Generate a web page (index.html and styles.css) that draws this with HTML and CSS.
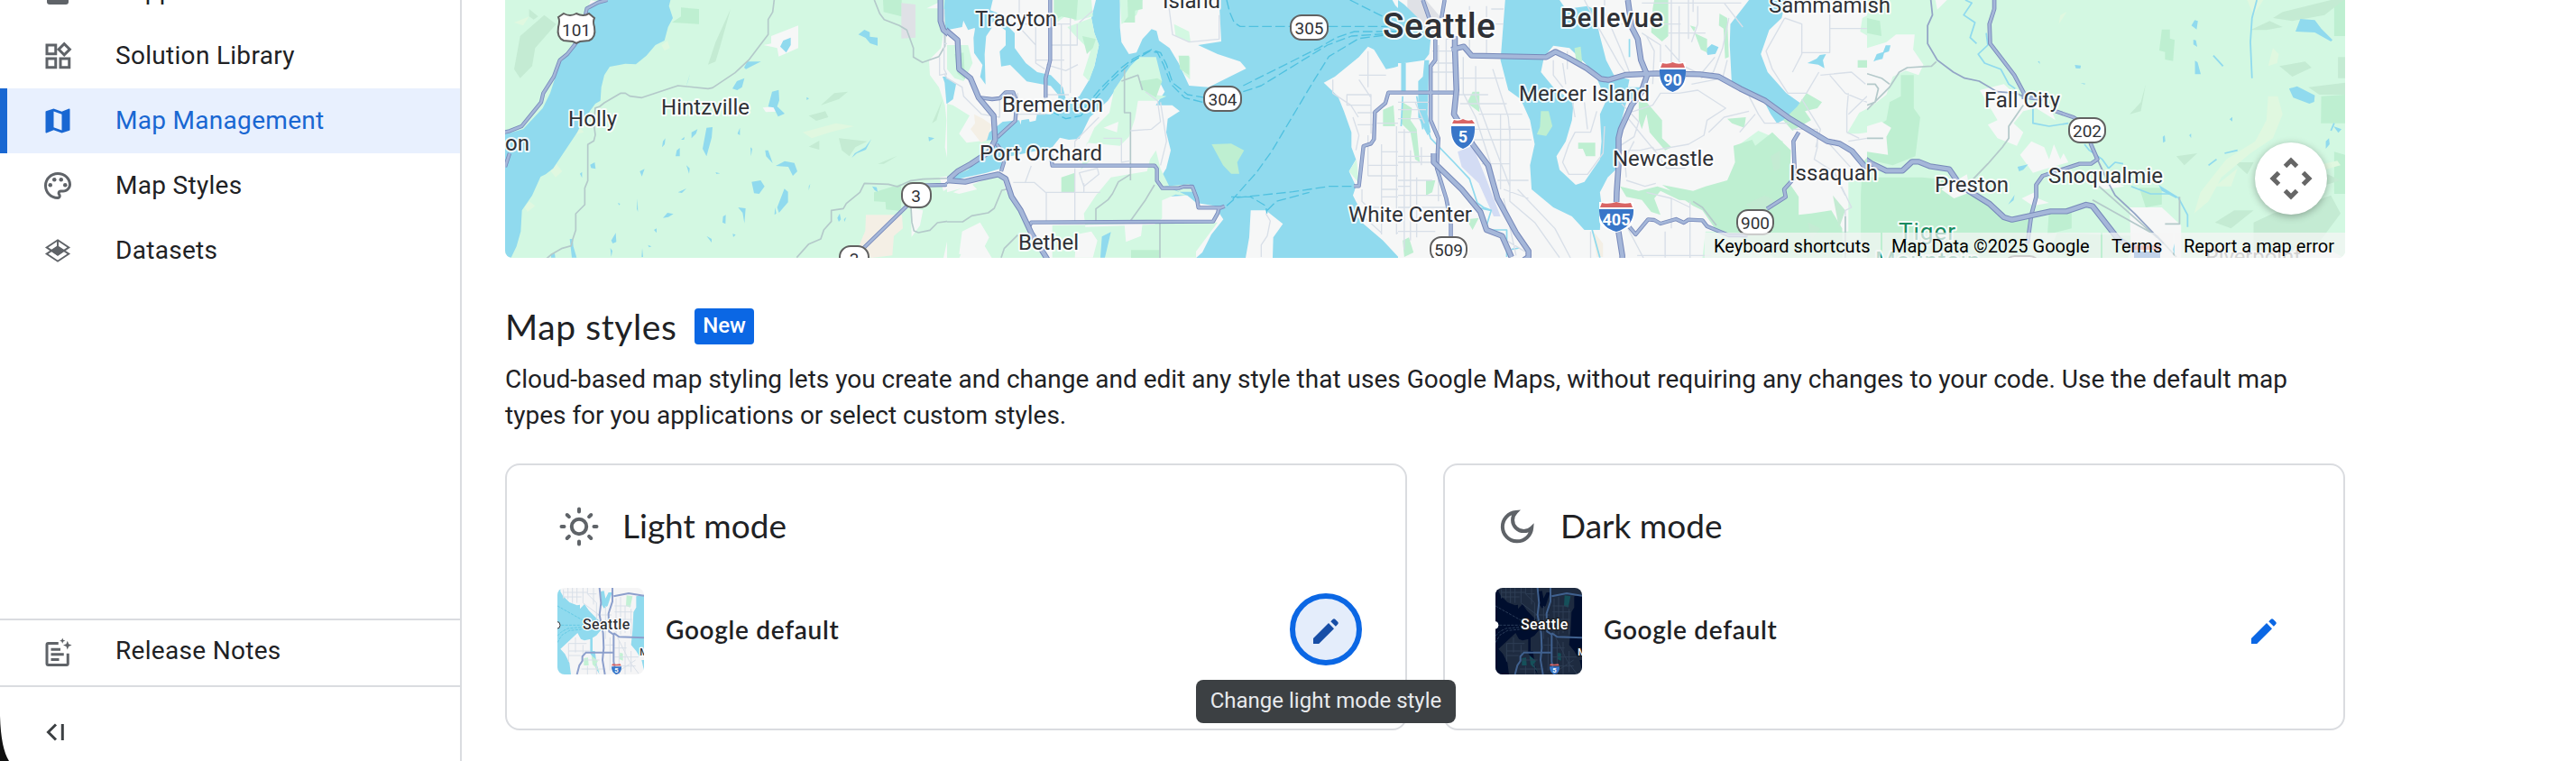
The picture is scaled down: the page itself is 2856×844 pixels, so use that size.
FILE: index.html
```html
<!DOCTYPE html>
<html lang="en">
<head>
    <meta charset="UTF-8">
    <title>Map Management</title>
    <link rel="stylesheet" href="styles.css">
</head>
<body>
<div class="sidebar">
    <div class="nav">
        <a class="nav-item first">
            <svg class="icon" viewBox="0 0 24 24"><rect x="4" y="2" width="16" height="20" rx="2"/></svg>
            <span>Support</span>
        </a>
        <a class="nav-item">
            <svg class="icon" viewBox="0 0 24 24"><path d="M3 3h8.500v8.500H3zm2 2v4.500h4.500V5zM3 13h8.500v8.500H3zm2 2v4.500h4.500V15zM13 13h8.500v8.500H13zm2 2v4.500h4.500V15zM16.800 1.700l5.500 5.500-5.500 5.500-5.500-5.500zm0 2.800l-2.700 2.700 2.700 2.700 2.700-2.700z" fill-rule="evenodd"/></svg>
            <span>Solution Library</span>
        </a>
        <a class="nav-item active">
            <svg class="icon" viewBox="0 0 24 24"><path d="M20.500 3l-.16.03L15 5.100 9 3 3.360 4.900c-.21.07-.36.25-.36.48V20.500c0 .28.22.5.5.5l.16-.03L9 18.900l6 2.100 5.640-1.900c.21-.07.36-.25.36-.48V3.500c0-.28-.22-.5-.5-.5zM15 19l-6-2.110V5l6 2.110V19z"/></svg>
            <span>Map Management</span>
        </a>
        <a class="nav-item">
            <svg class="icon" viewBox="0 0 24 24"><path d="M12 22C6.490 22 2 17.510 2 12S6.490 2 12 2s10 4.040 10 9c0 3.310-2.690 6-6 6h-1.770c-.28 0-.5.22-.5.5 0 .12.05.23.13.33.41.47.64 1.060.64 1.670 0 1.380-1.120 2.500-2.500 2.500zm0-18c-4.410 0-8 3.590-8 8s3.590 8 8 8c.28 0 .5-.22.5-.5 0-.16-.08-.28-.14-.35-.41-.46-.63-1.050-.63-1.650 0-1.380 1.120-2.500 2.500-2.500H16c2.210 0 4-1.790 4-4 0-3.860-3.590-7-8-7z"/><circle cx="6.500" cy="11.500" r="1.500"/><circle cx="9.500" cy="7.500" r="1.500"/><circle cx="14.500" cy="7.500" r="1.500"/><circle cx="17.500" cy="11.500" r="1.500"/></svg>
            <span>Map Styles</span>
        </a>
        <a class="nav-item">
            <svg class="icon" viewBox="0 0 24 24"><g fill="none" stroke="currentColor" stroke-width="1.300"><path d="M12 4.200l8.200 5.400-8.200 5.500-8.200-5.500zM12 9l8.200 5.400-8.200 5.400-8.200-5.400zM12 4.200V9"/></g><path d="M12 8.500l5.200 3.500-5.200 3.900L6.800 12z"/></svg>
            <span>Datasets</span>
        </a>
    </div>
    <div class="release">
        <svg class="icon" viewBox="0 0 24 24"><path fill="none" stroke="currentColor" stroke-width="2" d="M12.500 5H5a1 1 0 0 0-1 1v14a1 1 0 0 0 1 1h13.500a1 1 0 0 0 1-1v-7.500"/><path d="M7 8.500h7v2H7zM7 12.200h9.500v2H7zM7 16h6v2H7zM19.200 3.200l.9 2.300 2.300.9-2.300.9-.9 2.300-.9-2.300-2.300-.9 2.300-.9zM15.500 1l.6 1.500 1.500.6-1.500.6-.6 1.500-.6-1.500-1.500-.6 1.500-.6z"/></svg>
        <span>Release Notes</span>
    </div>
    <div class="collapse">
        <svg class="icon" viewBox="0 0 36 36"><path d="M17 9.500L8.500 18l8.500 8.500M24.300 9v18" fill="none" stroke="currentColor" stroke-width="3"/></svg>
    </div>
    <svg class="corner" viewBox="0 0 10 50"><path d="M0 0Q1 36 10 50H0z"/></svg>
</div>

<div class="content">
    <div class="map">
        <svg class="map-canvas" viewBox="560 0 2040 286">
            <!-- west: Hood Canal -->
            <svg x="550" y="0" width="501" height="286" viewBox="0 0 1503 858" preserveAspectRatio="none">
                <rect class="green" width="1503" height="858"/>
                <path class="shade" d="M110 30l30 25-15 10-15-10zM160 50l40 30-70 80-10 60-40 40-20-30 20-110zM1125 310l45-5-30 25-60 20zM1040 385l55-15 10 20-40 12zM1140 460l95 10-40 20-20 30-25-20zM1040 488l35-20v30zM1270 545l65-27-45 27zM780 30l-50 110-25 75 25-10 15-50zM1485 330l-35 80 15-10z"/>
                <path class="pale" d="M60 75l50-20-20 30zM550 150l20-14 8 24-18 8zM1020 440l110-30 60 10-80 20-60 20zM175 560l25-15 20 25-22 20zM250 450l30-25 12 15zM95 690l15-20 20 15-25 20z"/>
                <path class="water" d="M370 0L335 8 300 40 285 100 262 150 212 210 180 310 155 360 90 430 28 447V855l22 2 18-37 14-50 4-70 34-50 28-62 17-8 25-20 80-120 20-40 40-55 17-10 3-45 10-40 18-28 52-10 35 2 35-29 30-35 30-15 12-45 16-30-13-40 5-20z"/>
                <path class="park" d="M615 25l60 5v50l-90-5 30-20zM1287 0h62v55l-60-15zM1257 640l90-28v90l-50-5-2-25-38-2z"/>
                <path class="gray" d="M1348 10l47 5v110l-47 3z"/>
                <path class="sand" d="M1230 715h120l3 45-30 25-5 65-70 8-45-30 25-60z"/>
                <path class="urban" d="M915 120l90-35v75l-65 28-5-28-45-10 25-5zM887 358l50-5v18l-40 2zM300 40l15-40 20 5zM1440 200l40-40 20-120h3v500l-10-50 5-90-5-50-20-60-30-40zM1527 410h-5v40h-15zM1380 690l40 10-10 50-28 38zM1475 590l28-4v40l-15 10zM1503 790l-15 68h15zM1432 28l40-20v20z"/>
                <path class="water" d="M945 155l10-20 25-10v25l-15 25zM1205 115l20-16 18 8v15l26 3v27l-25-8-15-18zM825 225l10-20 46 0-30 15-20 10zM786 295l15-25 25-10-8 30-16 10zM918 305l22-6 2 35-7 20 25 24-22 10-15-30-18-3zM645 245l-5 20-10 30zM700 425l20-2-3 35-17 62-13-25zM650 440l20-10-5 15-15 15zM615 465l12-10-2 10zM552 490l3-20 8-10-2 20zM597 520l4-20 10-8v28zM803 445l8-20v25zM846 490l6 5-4 25zM895 500l10 0 15 43-22-23zM930 552l30-16 32 6 10 28-15 15-15-30zM850 605l30-5 13 20-18 25-17-2zM935 690l24-62 12 10v35l-30 35zM1183 525l10-15 35-20 20-27-18 35-30 12zM1438 455l20 5-18 10zM1485 255l30 0 20 35-5 45-32 10-6-70zM1490 30l2-30h11v100h-8zM313 548l15-8 3 22-15-3zM279 578l7-6v20zM478 570l16-8-9 25zM605 640l28-13-15 15zM633 550l11 10-2 18zM470 660l2 45-4-10zM405 675l8 3-4 5zM730 573l15 4-12 2zM555 725l15-17 20 4-17 10zM755 720l9-5-1 30-10-5zM805 690l25 3-4 50-6-35zM383 800l15-25 2 30-12 5zM245 795l10 0 2 25 11 37h-16zM183 845l12-2 2 14h-14zM486 825l3 30h-5zM380 825l7 10-4 20zM525 765l9-5v15zM700 785l17 10v12zM757 795l7 20zM787 778l10 3-8 8zM722 825l5 10zM1251 620l15 3 3 15-10-5zM1135 725l8-15 4 20-7 8zM1157 730l8-8-6 16zM1040 620l5-8-5 22zM928 690l4 20-6 5zM1033 323l8 5-8 5zM505 815l12 5-8 3z"/>
                <path class="minor" d="M925 0l-5 40-15 25v50l-65 85-45 42-75 50-15 3-100-10-120 40-40-5-15-10h-15l-55 32-15 12-15 5-5 50 5 40-5 20-20 12v120l-10 25v55l-30 30v55l-10 30-5 22-30 8-35 20-30 25-3 32M1258 0l18 45 15 20 50 20 25 15 22 60v30l30 18 55-20 20-35v-70M1000 857l40-45 40-17 10-30 25-28v-37l40-6 10-17 45-37 15-30 80 3 30 8 45-20 40-5 123-4M1380 690l3 50 7 28 15 6 38-8 25-25 35-5"/>
                <path class="fine" d="M1490 30v200l10 20M1475 190v60l25-5M1490 145h13M1490 245l13 20"/>
                <path class="casing" d="M370 0l-30 8-38 20-20 90-20 30-25 32-25 20-20 55-35 55-7 30-65 80-40 16-17 4M45 510l-15 45"/>
                <path class="highway" d="M370 0l-30 8-38 20-20 90-20 30-25 32-25 20-20 55-35 55-7 30-65 80-40 16-17 4M45 510l-15 45"/>
                <path class="casing wide" d="M1478 0v70l10 30 50 40v95l20 12"/>
                <path class="highway wide" d="M1478 0v70l10 30 50 40v95l20 12"/>
                <path class="casing" d="M1190 857l195-190 30-50 80-2 65-45M1515 600l45 8"/>
                <path class="highway" d="M1190 857l195-190 30-50 80-2 65-45M1515 600l45 8"/>
            </svg>

            <!-- Kitsap and Puget Sound -->
            <svg x="1050" y="0" width="501" height="286" viewBox="0 0 1503 858" preserveAspectRatio="none">
                <rect class="water" width="1503" height="858"/>
                <path class="urban" d="M152 0H495l-15 60 10 50 15 40-15 70-20 50-30 50-45 10-10-40-40-40-45-10-38-30-37-50v-50l-35-35-40 15-12-30zM0 100l50-10 5-25 20-4 18 35-5 30 2 50 28 40-8 40 18 25-3-100 5-60 30-45 35 25 0 50-20 20 5 50 30-5 55 55 80 15 25 30 0 40-25 25-45-5-5 25-20 5-3-10-25 4-2 15-5-15-55 5-50 40-15 70-50 45-60 25-50 20v-260l30-30-15-60-15-15z"/>
                <path class="urban" d="M0 605l60-15 70-15 50-15 5-35 75-15 90-20 25-32 30 7 35-3 35-72 60-55 65-95 80-30 16 0 10 60 18 35-30 45 55 0 25 20-40 25-5 45 15 60-15 60-30 50 0 30 30 15 70-5 30 25 60 10 30 45-40 50-30 60-32 28v20H0z"/>
                <path class="urban" d="M575 0H905l7 138-77 12 65 30 75 25 20 23-65 32-60 30-65-5-35-75-30-50-35-25-8-32-17-6-30 33-20 45-25 5-25-40-5-50zM1010 700h50l57 45-32 45-2 68h-90l12-68zM1253 275l37-20 80-65 30-35 20 10 40 65 25-5 18-5V857l-53-57-65-55-20-25 5-30-20-40 10-30-23-50 23-40-15-40v-50l-25-70-20-50zM1503 0v30l-12-12-10-18z"/>
                <path class="green" d="M0 150l70 0 15 60-30 60-30-10-25-30zM0 345l20 5 55 35-35 60 25 30 85-10-10 30-70 70-70 30zM360 0h120l5 55-60 15-20-25-40 30zM400 90l80-30 10 50 15 40-15 70-18 50-20-20 25-80-50-50zM555 300l55-80 30-30 55 0 20 80-30 45 45 5-35 15-60 0-10 60-20 60-30 30-110-10-20 90 30-30-25-20 40-90 50-50zM695 500l-20 30-10 40-60 10-60 10-50 60-40 60 5 45 230-8 25-20 0-60 45-20 40 5-60-30-30-60zM0 640l70-20 110-45 15 60 75 110 60 115H150l-30-50-60 5-20 45H0zM350 750l550-10-72 97v20H350zM725 620l80-7 25 25-60 0zM575 0h75l-20 50-50 30zM770 185l38 5v75l-20-20zM755 80l50 25 5 35-50-20zM1337 570l25-40 8 80z"/>
                <path class="urban" d="M50 770l60-30 30 50-30 60-70-5zM430 780l50-10 20 30-15 57h-60zM590 745l60 0-5 40-50 20zM520 425l50-20-5 35zM20 640l60-30 20 20-60 15z"/>
                <path class="park" d="M355 0h80l-5 65-50-10-25 15zM450 120l45 10-10 30-20 20zM600 0h50v30l-25 5v40h-38l15-20zM640 270l60-10 15 10-20 55-50-30zM770 185h35v65l-30-20zM380 590l45-15v65h-45zM612 832h95v26h-95zM880 480l65-2 43 22-23 40 7 38h-27l-27-28zM1450 365l35-15 5 70h-40zM25 180l30-5 5 90-25-20zM1515 360h-12v40l20-5zM1540 790l-15 20-10 20 25 17z"/>
                <path class="sand" d="M78 430l15-20-3-30 30 15 28 20-15 50-20 10z"/>
                <path class="water" d="M0 260l30 20-10 50-20 15zM510 857l5-70 30-15-20 85zM0 0h150l-15 30 50 20-20 20-95 30-20-40-30 10-20 20z"/>
                <path class="minor" d="M0 738h52l30-20 55-10 20-15 25-60 25-5M180 857l10-30 45-45M495 735v-40l40-30 15-20 20-40 40-25M610 735l50-70 30-50M708 740v118M590 220v155h20v225M580 270l55-20 15 50"/>
                <path class="fine" d="M240 0v90l55 60v60l30 20M295 90v110h95M343 150h90V80M380 80v230M410 80v230M330 215l65 20 40-20M440 75l45-40M230 80h180V60M0 260l50 30 5 30 60 60 60 10v-70M235 310v70l90 0v-65h80M425 470v60M520 460h60v80l30-5M425 470l80-80M610 435l70-5 30-25-10-70-40-30M735 0l15 115 55 25 100-10V50M425 560v180M330 640h180M330 640v100M220 607h70l40 35M260 607l20-55M440 575l60-15 5 20-50 40zM455 610v30M710 340l20 130-20 80M1400 170v120M1283 265v45l60 40 25 40M1370 250h90M1330 315h80v35h-80zM1370 265l40 60v120M1365 375h60v40h-60M1350 390l20 60-10 50M1400 450v135M1400 550h103M1400 585h103M1445 480v300M1515 350v480M1445 505h60v150h-60M1445 630h58M1380 630v40l20 20M1385 690h60M1385 720l60 55M1430 410h73M1060 710l15 25-10 50-20 30v40M1495 420v360M1495 775h10"/>
                <path class="ferry" d="M930 0l10 40 15 35 20 13H1503M1340 0l110 55M860 325l-60-10-50-40-20-60-20-40-30-10-60 30-40 30-70 70-50 60-60 10-30-10M850 340l-60-15-45-45-25-65-20-40-25-5-60 35-80 75-90 105-50 10-40-20M985 285l100-50 150-75 60-35 60-20h150M985 305l60-20 220-135 80-30 150-10M1450 118l-80 10-100 60-50 80-140 235-50 70-80 90M930 685l30-27 190-20 120-18 90 0M945 655h65l50 30 4 25M1065 700l30-30 110-30"/>
                <path class="casing" d="M343 0v200l-15 60v65M110 325l40 5 25-3 20-20h25l12 30-5 65-60 55M180 570l15-50-30-40M345 515l5 36h340l8 10v40l18 25h55l15-5h30l15 40 5 30h75l12-5M905 690l-5 20-15 27-605 3-10 20M1503 308h-35l-10 35-35 30-3 90-10 15-25 8-15 133h-17"/>
                <path class="highway" d="M343 0v200l-15 60v65M110 325l40 5 25-3 20-20h25l12 30-5 65-60 55M180 570l15-50-30-40M345 515l5 36h340l8 10v40l18 25h55l15-5h30l15 40 5 30h75l12-5M905 690l-5 20-15 27-605 3-10 20M1503 308h-35l-10 35-35 30-3 90-10 15-25 8-15 133h-17"/>
                <path class="casing wide" d="M-10 95l45 38 5 97 38 30 27 65 50 60 5 80-20 40-60 40-45 25-45 40M0 600l60 5 40-10 70-15 25 15 20 60 30 45 35 75 55 90"/>
                <path class="highway wide" d="M-10 95l45 38 5 97 38 30 27 65 50 60 5 80-20 40-60 40-45 25-45 40M0 600l60 5 40-10 70-15 25 15 20 60 30 45 35 75 55 90"/>
            </svg>

            <!-- Seattle, Bellevue, Issaquah -->
            <svg x="1550" y="0" width="521" height="286" viewBox="0 0 1513 858" preserveAspectRatio="none">
                <rect class="urban" width="1513" height="858"/>
                <path class="gray" d="M30 0h60l45 55-5 70-40-15-60-80z"/>
                <path class="water" d="M0 0l20 15 50 50 35 65-5 50-15 20-65 10H0zM10 210h15v95h-15zM345 0h175l20 30 70-10 20 10 20 90 20 80 25 50 50 15-5 25 60 0-5 20-60 30-15 60-15 60v100l-30 30-25 50 5 40-5 85-50 0-40-45-60-30-70-60-5-80 15-70-15-80-30-70-40-30-25-100zM1130 0h120l-15 60-40 40-27 80 22 60 60 70 55 40-15 30-40 15-30 15-20-30-30-60-95-30-7-140 2-70zM85 200l15 0-5 180 10 60-10 10-30-60 0-120 15-15zM990 165l20-18 22 10-10 22-25 4zM1318 210l30-15 10-12 20-3-10 20 5 27-20-12zM1533 210v-35l25-5v10zM560 530l5 12h-8z"/>
                <path class="urban" d="M470 190l30-38 52 8 50 50 38 50 30 75-20 45 5 90-5 60-50 75-28 10-52-50-10-45 30-50 20-70 5-60-65-50-40-50z"/>
                <path class="green" d="M1445 445l40-70 28-15v80l-30 5zM1100 480l60-45 80 35-20 50zM1450 600l60 0v258h-60zM1495 60l18-10v70l-25-15zM990 770h520v88H980z"/>
                <path class="park" d="M825 0h45v120l-20 18-35-30 5-80zM1035 45l25 15 5 130-12 5-5-100-15-10zM955 110l40 20v45l-20-10zM940 85l18 5-5 15zM460 370h25l12 50-20 32-30-5 10-25zM580 475h55v45h-30l-10-25h-15zM568 160l20-5 5 55-20-10zM240 305h22v68l-40-30zM15 340l30 20-5 40 20 30 10 110-15-10-15-90-30-30zM775 340l25 0 50 60 0 60 30 30-20 10-50-60-10-60-15 50-10-30zM1080 485l60-20 10 20 55-45 60 60-5 110 30 45v60l40-5 65-10 35 60v130l-90 10-160-80-160-60-40-60-30-15-100-70 100 20 40-15 70-20 25-60zM1240 400l45-45 30-45 50 30-15 20-40 10 20 30-60 35zM1480 200h45v25h-45zM715 620l60 15 60-15 90 30 40 20-60-5-60-30-20 25 20 55-30-10-30-40-50-10zM1060 395l60-5-5 35-40-15zM90 600l30 0-10 40-20 10zM220 730l40-5-20 40zM15 800l20-10 15 50-30 15zM1495 540l20-20v280h-25v-150zM1130 780l180 20 100 57h-200z"/>
                <path class="shade" d="M1120 680l60-30 40 20-15 25-60 5zM1200 520l30-20v60l-20 10zM1320 740l40 20-30 40zM1400 650l40 50-20 60z"/>
                <path class="industry" d="M192 505l48-20 40 100 50 135h-22l-48-110-55-55z"/>
                <path class="sand" d="M625 765l35 45v45h-20z"/>
                <path class="stream" d="M85 400l20 60 75 80 50 55 25 80 20 15 25 10-15 50M10 420l5-100M60 320l20 110M250 690l50 10M280 765h70v90M365 830l25-5M625 765l25 92M745 130v60M1533 210l5-30"/>
                <path class="fine" d="M130 150v520M155 130v170M110 170h80M110 210h80M110 240h80M155 130h30M0 340h100M0 365h90M0 395h80M0 540h110M0 520h120M20 430v400M40 500v300M0 650h140M0 690h160M0 770h120M60 590v200M0 620h40M210 190v120l40 80 50 160 20 100M250 220v100l50 140 60 160M285 20v170M305 230l50 160 5 60M330 380v250M360 420v230M215 430h210M240 465h190M270 545h90M320 600h100M340 630l80 30M300 30h40M240 80h100M230 20v160M260 380h140M200 260h140M190 315h100M200 345h150M360 620v50l80 70 80 117M340 660l40 190M300 770l130 80M385 630l120 130 50 98M620 770v88M600 0l50 100 60 110 20 30M665 0v40l50 120 30 80M690 80h220M880 0v240M905 20v200M935 0v130M965 20v60l-20 60M785 10h320M785 110l60 40v80M860 150l60 70 60 30M870 110h120M1020 190l-40 50M1065 60l-20 100-30 80-40 20M1050 10l60 80M1060 200l-15 60-100 20M1130 320l30 60 20 30h80M820 350l25-40 60 0 60-10 90 60-60 40-10 50-50 30-110 20-40-50-55-70zM720 345l55 60-15 50-45 30M720 500l60 0 40-10 45 70 60 0M735 600l60 20 35-10M760 470l-30 60 5 60M880 660v100M940 670v188M800 640l80 20 60 30M730 740l60 118M860 770v87M770 850h240M1245 60l55 20v100l-30 60M1245 60l-60 110 20 60 50 80 60 0 40-70M1300 175h90V20M1390 95h120M1360 250l100-10 45 40M1390 250l50 60 70 30M1450 310l-5 60 0 70 40 20M1300 330l60 100-15 60M1270 430h80v60l-10 40 60 40 40 80M1400 560l60 130-20 10v140M1460 560l-70-80M1450 470l60-10M1450 380l60-60M500 200v50l60 80 10 60M530 210l10 70M545 170v60M640 370l-20 70-50 0-20 40-20 60 20 40 60 0 50-70 5-90M600 340l10 90M1000 440l50-50 80-20M1100 440l50-60M950 0v40M800 120l25 50-5 110M1440 720v138M0 600h110M75 490v60M0 440h60M55 340l30 70"/>
                <path class="minor" d="M950 670l30 20 45 60M1440 720v138"/>
                <path class="casing" d="M1290 440l-17 30 5 120-35 40 5 25-60 40M745 755l20 25 40-50 20 2 20 12 50-15 25 12 15-10 45 2 15 20 70 30 60 0M0 308h180M120 130v70l-15 20v180l25 60-5 100 30 100 15 80v100M80 0l20 60M150 0l-10 60"/>
                <path class="highway" d="M1290 440l-17 30 5 120-35 40 5 25-60 40M745 755l20 25 40-50 20 2 20 12 50-15 25 12 15-10 45 2 15 20 70 30 60 0M0 308h180M120 130v70l-15 20v180l25 60-5 100 30 100 15 80v100M80 0l20 60M150 0l-10 60"/>
                <path class="casing wide" d="M183 120v40l5 140-8 80 60 100 50 70 30 110 60 115 40 60v20l-15 10M172 165l40-10 25 30 240 5 30-18 40 20 60 35 45 35 25 4 55-17 100-5 140 3 60 8 70 40 80 40 80 60 120 75 40 8 40 25 40 50h50l30-25 30 0 50 20M115 510v30l90 90 60 75 20 60 50 20 30 70M740 0l12 90 20 40 10 70 20 50-20 60-30 40-35 80-7 30v90l-6 90-2 80 20 130 0 30-10 30"/>
                <path class="highway wide" d="M183 120v40l5 140-8 80 60 100 50 70 30 110 60 115 40 60v20l-15 10M172 165l40-10 25 30 240 5 30-18 40 20 60 35 45 35 25 4 55-17 100-5 140 3 60 8 70 40 80 40 80 60 120 75 40 8 40 25 40 50h50l30-25 30 0 50 20M115 510v30l90 90 60 75 20 60 50 20 30 70M740 0l12 90 20 40 10 70 20 50-20 60-30 40-35 80-7 30v90l-6 90-2 80 20 130 0 30-10 30"/>
            </svg>

            <!-- east: Snoqualmie valley -->
            <svg x="2070" y="0" width="530" height="286" viewBox="0 0 1484 858" preserveAspectRatio="none">
                <rect class="green" width="1484" height="858"/>
                <path class="park" d="M0 60l40 10 5 50-45-10zM105 250h40v110l20 30-15 130-70 30-80-20v-90l60-40 10-60 35-20zM0 590h170l100 10 160 130 75-10v138H0zM565 700l70-10v70l-75 20zM915 98h25v30l15 5-5 70-25-5v-25l-18-5zM845 625l70 0v55l-50 10zM1450 0h34v120h-34zM1410 320l74-5v95h-75zM1450 505l34 10v130h-34zM590 775l240 10-20 73H560z"/>
                <path class="shade" d="M1290 40l150-40h40l-60 50-100 20-60-10zM1370 290l114-15v40h-80zM1280 220l80-15 20 20-60 30zM1190 100l60-30 40 20-50 10zM1462 190h22v70h-22zM865 280l-15 90-35 10 35-40zM1200 740l60-30 100-30 80-30 30 60-90 130h-180zM1080 740l60-40 60 0-70 60zM1230 610l80-40-20 50zM1370 620l60-40 40 20-60 20zM1140 540l60 0-20 40zM960 520l65-10-40 40z"/>
                <path class="pale" d="M1245 320l30 0 15 60-30 80-70 50-90 80-40 80-45 40 20-70 80-110 90-60 35-70zM1260 160l18 20-5 30-28 10zM1180 0h50l-30 50zM600 50l20-10-25 40zM1400 550l60-15 10 15-50 15zM1080 620l70-60-20 60z"/>
                <path class="urban" d="M90 115h58l-5 50 32 50-15 35-40-15-40 20-20 60-60 50V160l60-20zM212 0h36l-30 32zM350 300l75-20 30 30 60 40 50 0 20 50-60-40-40 10-30 40 30 30-20 45-60-25-30-45 30-15zM475 515l35-45 40 20 15 40 15-50 20 50 10-20 15 30-80 25-30 10-40-60zM0 420l45-15 30 20-15 30 5 60-65-10zM815 690l100 0 60 60v108H820zM480 660l40-20 10 20 35 15-50 10zM720 590l80 30-60 10-30-10zM1330 858l70-50 80 50zM230 630l80-50 10 60-50 20z"/>
                <path class="water" d="M1330 105l15-42 45 4 20 28 35 38-5 5-50-30zM1310 295l25-8 55 30-2 22-15 6-50-20zM1007 85l10-18 10 3-4 28zM1013 132l8 2 4 22-12-8zM1018 202l8 5 10 40-18 0zM645 216l19 2-2 10-14-1zM530 205l5-2 2 10zM663 276l15 2-3 3zM1448 420l25 10-10 12zM1424 470l10-10 2 20-12 15zM1125 397l9-8v15zM918 455l6-5 2 20-7 5zM1000 450l6-6v15zM467 555l33-8-15 18-13 5zM438 680l20-32-3 18zM20 205l10-25 20-7 8-22h15l-5 20-15 5-5 20-20 5zM905 615l60 40-5 5-45-25zM950 830l4-20v40z"/>
                <path class="stream" d="M305 0l20 10-25 40 35 25-15 50 20 20M370 110l5 40-30 30 20 30 50 20 25 50 20 15M1210 0l-15 60-5 80 5 120M515 355v55l50 10 60-10M675 480l15 20 40 30 20 30M750 560l20-20 25 5M820 620l60 25 60 0M965 655l30 60v40M1060 550l25-20M1110 510l40-10M1075 185l30 35M1450 410l-10 25"/>
                <path class="minor" d="M215 205l-15 15-75 5-25 15-30 50-70 75M0 245l45 15 25 20M0 280l25 0 10 15-10 45-25 10M485 350l-45 70v40l-20 30-45 55-45 50M0 460h50M700 665l200 120 60 70M970 655v90h-45M720 620l180 170"/>
                <path class="line" d="M198 0l5 50-15 35v60l30 55 50 40 35 20 45 10 55 35 60 5 40 20M715 530l30 70 25 50 60 60 90 100"/>
                <path class="casing" d="M395 0v30l-15 50 2 65 75 105 30 60v20M585 370l55 20 45 30 10 60 20 50-20 15-35 0-115 40-20 30v40l-15 60-12 95M505 325l40 5"/>
                <path class="highway" d="M395 0v30l-15 50 2 65 75 105 30 60v20M585 370l55 20 45 30 10 60 20 50-20 15-35 0-115 40-20 30v40l-15 60-12 95M505 325l40 5"/>
                <path class="casing wide" d="M-5 530l20 15 45 23h50l30-30 20 0 35 15 60 10 35 55 90 60 45 45 25 8 120-28 50 0 60-22 20 5 80 110 60 40"/>
                <path class="highway wide" d="M-5 530l20 15 45 23h50l30-30 20 0 35 15 60 10 35 55 90 60 45 45 25 8 120-28 50 0 60-22 20 5 80 110 60 40"/>
            </svg>

            <!-- route shields -->
            <g class="route">
                <path d="M619 19l6-4q7 4 14 0 8 4 14 0l6 5q-2 4 0 10 2 12-6 15l-10 1-4 2-4-2-10-1q-8-3-6-15 2-7 0-11z"/><text x="639" y="39.500">101</text>
                <rect x="1431" y="17" width="41" height="27" rx="12"/><text x="1451.500" y="37.500">305</text>
                <rect x="1335" y="96" width="41" height="27" rx="12"/><text x="1355.500" y="117">304</text>
                <rect x="1000" y="203" width="32" height="27" rx="12"/><text x="1015.500" y="223.500">3</text>
                <rect x="931" y="273" width="32" height="27" rx="12"/><text x="947" y="294">3</text>
                <rect x="1586" y="263" width="40" height="27" rx="12"/><text x="1606" y="284">509</text>
                <rect x="1926" y="233" width="40" height="27" rx="12"/><text x="1946" y="254">900</text>
                <rect x="2294" y="131" width="40" height="27" rx="12"/><text x="2314" y="152">202</text>
                <rect x="2222" y="284" width="40" height="27" rx="12"/>
            </g>
            <g class="interstate">
                <path class="i-white" d="M1609 132h26v20q0 9-13 14-13-5-13-14zM1840 69h29v20q0 9-14.500 14-14.500-5-14.500-14zM1773 224h38v20q0 9-19 14-19-5-19-14z"/>
                <path class="i-red" d="M1610 137l2-4q5 2 10-1 5 3 10 1l3 4zM1841 75l2-5q6 2 11.500-1 5.500 3 11.500 1l2 5zM1774 230l2-5q8 2 16-1 8 3 16 1l2 5z"/>
                <path class="i-blue" d="M1609 140h26q1 20-13 25-14-5-13-25zM1840 77h29q1 20-14.500 25-15.500-5-14.500-25zM1773 232h38q1 19-19 25-20-6-19-25z"/>
                <text x="1622" y="158">5</text><text x="1854.500" y="95">90</text><text x="1792" y="250">405</text>
                <path class="i-red" d="M2366 272h28l2 5h-31z"/><path class="i-blue" d="M2366 279h29v10h-29z"/>
            </g>

            <!-- place names -->
            <g class="place">
                <text x="560" y="166.500">on</text>
                <text x="630" y="139.500" textLength="54">Holly</text>
                <text x="733" y="127" textLength="98">Hintzville</text>
                <text x="1081" y="29" textLength="91">Tracyton</text>
                <text x="1289" y="9" textLength="64">Island</text>
                <text x="1111" y="124" textLength="112">Bremerton</text>
                <text x="1086" y="177.500" textLength="136">Port Orchard</text>
                <text x="1129" y="276.500" textLength="67">Bethel</text>
                <text x="1495" y="246" textLength="137">White Center</text>
                <text x="1684" y="111.500" textLength="145">Mercer Island</text>
                <text x="1961" y="14" textLength="135">Sammamish</text>
                <text x="1788" y="184" textLength="112">Newcastle</text>
                <text x="1984" y="200" textLength="98">Issaquah</text>
                <text x="2200" y="119" textLength="84">Fall City</text>
                <text x="2145" y="213" textLength="82">Preston</text>
                <text x="2271" y="203" textLength="127">Snoqualmie</text>
                <text class="bellevue" x="1730" y="29.500" textLength="114">Bellevue</text>
                <text class="seattle" x="1533" y="41.500" textLength="125">Seattle</text>
                <text class="mountain" x="2105" y="266" textLength="63">Tiger</text>
                <text class="mountain" x="2079" y="298" textLength="116">Mountain</text>
                <text class="faint" x="2445" y="293" textLength="106">Riverpoint</text>
            </g>
        </svg>
        <div class="pan">
            <svg viewBox="0 0 80 80"><path d="M33.500 26.500l6.500-6.500 6.500 6.500M33.500 53.500l6.500 6.500 6.500-6.500M26.500 33.500L20 40l6.500 6.500M53.500 33.500L60 40l-6.500 6.500"/></svg>
        </div>
        <div class="attribution">
            <span class="keys">Keyboard shortcuts</span>
            <span class="data">Map Data ©2025 Google</span>
            <span class="terms">Terms</span>
            <span class="report">Report a map error</span>
        </div>
    </div>

    <div class="heading">
        <h2>Map styles</h2>
        <span class="badge">New</span>
    </div>
    <p class="intro">Cloud-based map styling lets you create and change and edit any style that uses Google Maps, without requiring any changes to your code. Use the default map<br>types for you applications or select custom styles.</p>

    <div class="cards">
        <div class="card">
            <div class="card-title">
                <svg class="mode" viewBox="-24 -24 48 48"><circle r="8.200"/><path stroke-linecap="round" d="M0-19.500v3M0 16.500v3M-19.500 0h3M16.500 0h3M-13.300-13l2.200 2.200M13.300-13l-2.200 2.200M-13.300 13l2.200-2.200M13.300 13l-2.200-2.200"/></svg>
                <span>Light mode</span>
            </div>
            <div class="card-row">
                <svg class="thumb light" viewBox="0 0 288 288">
                    <g id="downtown">
                        <rect class="t-land" width="288" height="288"/>
                        <path class="t-water" d="M0 0h10v12l8 14 22 22 25 10 10-2v14l15-16 15 22 20 20 15 14 5 30-15 18-20 12-20 5-12-5-11-20-57 53 15 17 15 30 5 38H0zM143 12l12-2 5 25 10-20 12 0-15 45-12 8-8-12zM262 28l26-5v190l-15 15-11-18-17-20 5-50 3-60 9-15zM109 165h8v45h8l5 40 10 38-12-20-12-40-7-10zM280 240h8v35z"/>
                        <path class="t-park" d="M230 25l20 3-8 37-14-5zM88 234l14-2 2 26H88zM113 225l22 18-8 12 15 25-25-25zM208 215l10 3v24l-12-5z"/>
                        <path class="t-fine" d="M20 5v30M35 0v38M50 0v50M65 0v50M85 0v50M100 0v20l30 30v60M20 15h80M20 30h60M100 20h30M120 0v55M85 50l60 45M130 90h50M120 110h50M195 35v120M210 30v125M225 60v90M245 70v85M190 60h55M190 80h60M190 105h58M160 60v110M200 165l40 80 30 40M175 165v110M205 175v113M225 180v108M245 210v70M190 200h40M190 230h80M190 260h70M160 190h30M60 165v50M37 185h60M37 210h70M37 225h40M37 185v60M85 190v30M80 240h60M100 260v28M130 250v38M80 270h80M200 280l60-40"/>
                        <path class="t-ferry" d="M0 60l85 48M0 124h80M0 160l15-15 20-10 45-4M0 182l15-25 25-15 40-4"/>
                        <path class="t-road" d="M140 0l5 50-5 40 12 60 2 50-4 40 8 48M183 0v45l-13 40 2 60 15 10v90l8 43M187 150l18 13 83 3M187 28l50-10 51 8M65 288l8-30 10-15 0-15 12-13h92"/>
                        <path class="i-red" d="M180 259l3-6 13 1 13-1 3 6z"/><path class="i-blue" d="M180 262h33q2 20-16 26-18-6-17-26z"/>
                        <text class="t-route" x="196.500" y="281">5</text>
                        <circle class="t-dot" cx="-3" cy="124" r="12"/>
                        <text class="t-name" x="84" y="137" textLength="157">Seattle</text>
                        <text class="t-name small" x="274" y="226">M</text>
                    </g>
                </svg>
                <span class="style-name">Google default</span>
                <button class="edit focused">
                    <svg viewBox="0 0 28 28"><path d="M0 22v6h6.200L23 11.200 17 5zM19.300 3.300l2.200-2.200q1.500-1.500 3 0L27 3.600q1.500 1.500 0 3l-2.100 2.100z"/></svg>
                    <span class="tooltip">Change light mode style</span>
                </button>
            </div>
        </div>
        <div class="card">
            <div class="card-title">
                <svg class="mode" viewBox="-24 -24 48 48"><path d="M-1.300-16A16.200 16.200 0 1 0 16.200 1.500 12.200 12.200 0 0 1-1.300-16z"/></svg>
                <span>Dark mode</span>
            </div>
            <div class="card-row">
                <svg class="thumb dark" viewBox="0 0 288 288"><use href="#downtown"/></svg>
                <span class="style-name">Google default</span>
                <button class="edit">
                    <svg viewBox="0 0 28 28"><path d="M0 22v6h6.200L23 11.200 17 5zM19.300 3.300l2.200-2.200q1.500-1.500 3 0L27 3.600q1.500 1.500 0 3l-2.100 2.100z"/></svg>
                </button>
            </div>
        </div>
    </div>
</div>
</body>
</html>
```

FILE: styles.css
```css
*{
    box-sizing: border-box;
}
html{
    height: 844px;
    overflow: hidden;
}
body{
    margin: 0;
    display: flex;
    height: 844px;
    overflow: hidden;
    background: #fff;
    color: #202124;
    font-family: Roboto, sans-serif;
    font-size: 28px;
}

/* sidebar */
.sidebar{
    position: relative;
    display: flex;
    flex-direction: column;
    width: 512px;
    height: 844px;
    border-right: 2px solid #dadce0;
    overflow: hidden;
}
.nav{
    flex: 1;
    min-height: 0;
}
.nav-item{
    display: flex;
    align-items: center;
    gap: 46px;
    height: 72px;
    padding-left: 46px;
    letter-spacing: 0.3px;
}
.nav-item span{
    padding-bottom: 2px;
}
.nav-item.first{
    margin-top: -46px;
}
.nav-item.active{
    background: #e8f0fe;
    border-left: 8px solid #1967d2;
    padding-left: 38px;
    color: #1967d2;
}
.icon{
    width: 36px;
    height: 36px;
    color: #5f6368;
    fill: currentColor;
}
.active .icon{
    color: #1967d2;
}
.release{
    display: flex;
    align-items: center;
    gap: 46px;
    height: 74px;
    padding-left: 46px;
    padding-bottom: 6px;
    border-top: 2px solid #dadce0;
    letter-spacing: 0.3px;
}
.release .icon{
    margin-top: 6px;
}
.collapse{
    display: flex;
    height: 84px;
    padding: 32px 0 0 45px;
    border-top: 2px solid #dadce0;
}
.collapse .icon{
    color: #3c4043;
}
.corner{
    position: absolute;
    left: 0;
    bottom: 0;
    width: 10px;
    height: 50px;
    fill: #111;
}

/* map */
.content{
    width: 2040px;
    margin-left: 48px;
}
.map{
    position: relative;
    height: 286px;
    border-radius: 0 0 8px 8px;
    overflow: hidden;
}
.map-canvas{
    display: block;
    width: 2040px;
    height: 286px;
}
.green{ fill: #d3f8e2; }
.park{ fill: #beefd1; }
.pale{ fill: #e0f8e0; }
.shade{ fill: #c4ebd3; }
.urban{ fill: #f6f7f7; }
.gray{ fill: #dfe1e6; }
.sand{ fill: #f4efe5; }
.industry{ fill: #d3dcf4; }
.water{ fill: #90daee; }
.stream, .minor, .fine, .line, .ferry, .casing, .highway{
    fill: none;
    stroke-linejoin: round;
}
.stream{ stroke: #90daee; stroke-width: 5; }
.minor{ stroke: #b4c9ca; stroke-width: 5; }
.fine{ stroke: #d8dfe8; stroke-width: 4; }
.line{ stroke: #93a5c6; stroke-width: 5; }
.ferry{ stroke: #50c1e0; stroke-width: 4; stroke-dasharray: 32 12; }
.casing{ stroke: #7789ba; stroke-width: 13; }
.highway{ stroke: #a5b7d9; stroke-width: 8; }
.casing.wide{ stroke-width: 19; }
.highway.wide{ stroke-width: 13; }

.route rect, .route path{
    fill: #fff;
    stroke: #616161;
    stroke-width: 2;
}
.route text{
    font-size: 19px;
    text-anchor: middle;
    fill: #303236;
}
.i-white{ fill: #fff; }
.i-red{ fill: #d96565; }
.i-blue{ fill: #3876c8; }
.interstate text{
    font-size: 18px;
    font-weight: 700;
    text-anchor: middle;
    fill: #fff;
}
.place text{
    font-size: 24px;
    fill: #2f3136;
    stroke: #fff;
    stroke-width: 4px;
    stroke-linejoin: round;
    stroke-opacity: 0.85;
    paint-order: stroke;
}
.place .bellevue{
    font-size: 29px;
    font-weight: 500;
}
.place .seattle{
    font-size: 39px;
    font-weight: 500;
}
.place .mountain{
    font-size: 26px;
    fill: #188a60;
}
.place .faint{
    fill: #777;
}
.pan{
    position: absolute;
    right: 20px;
    top: 158px;
    width: 80px;
    height: 80px;
    border-radius: 50%;
    background: #fff;
    box-shadow: 0 2px 8px rgba(0,0,0,0.3);
}
.pan svg{
    display: block;
    fill: none;
    stroke: #666;
    stroke-width: 5;
}
.attribution{
    position: absolute;
    right: 0;
    bottom: 0;
    display: flex;
    gap: 2px;
    width: 710px;
    height: 28px;
    line-height: 30px;
    font-size: 20px;
    color: #000;
    white-space: nowrap;
}
.attribution span{
    padding-left: 10px;
    background: rgba(245,245,245,0.72);
}
.keys{ width: 195px; }
.data{ width: 242px; }
.terms{ width: 78px; }
.report{ flex: 1; }

/* map styles */
.heading{
    display: flex;
    align-items: center;
    gap: 18px;
    height: 40px;
    margin-top: 56px;
}
.heading h2{
    margin: 0;
    padding-bottom: 1px;
    width: 192px;
    font-family: Lato, sans-serif;
    font-size: 39px;
    font-weight: 400;
    letter-spacing: 0.6px;
    white-space: nowrap;
}
.badge{
    width: 66px;
    height: 40px;
    border-radius: 4px;
    background: #0b67e4;
    color: #fff;
    font-size: 24px;
    font-weight: 500;
    line-height: 39px;
    text-align: center;
}
.intro{
    margin: 19px 0 33px;
    line-height: 40px;
    white-space: nowrap;
}
.cards{
    display: flex;
    gap: 40px;
}
.card{
    width: 1000px;
    height: 296px;
    padding: 44px 48px 0 56px;
    border: 2px solid #dadce0;
    border-radius: 16px;
}
.card-title{
    display: flex;
    align-items: center;
    gap: 24px;
    height: 48px;
    font-family: Lato, sans-serif;
    font-size: 37px;
}
.card-title span{
    padding-bottom: 4px;
}
.mode{
    width: 48px;
    height: 48px;
    fill: none;
    stroke: #5f6368;
    stroke-width: 4;
}
.card-row{
    display: flex;
    align-items: center;
    height: 96px;
    margin-top: 44px;
}
.thumb{
    width: 96px;
    height: 96px;
    margin-right: 24px;
    border-radius: 8px;
}
.light{
    --land: #f5f5f6;
    --water: #90daee;
    --park: #c3f1d5;
    --fine: #d8dfe8;
    --road: #8c9fcc;
    --ferry: #50c1e0;
    --name: #303236;
    --halo: #fff;
}
.dark{
    --land: #1e2b40;
    --water: #000e2e;
    --park: #15505a;
    --fine: #2e3e55;
    --road: #40618f;
    --ferry: #40556f;
    --name: #fff;
    --halo: #1c1e22;
}
.t-land{ fill: var(--land); }
.t-water{ fill: var(--water); }
.t-park{ fill: var(--park); }
.t-fine{ fill: none; stroke: var(--fine); stroke-width: 3; }
.t-road{ fill: none; stroke: var(--road); stroke-width: 6; }
.t-ferry{ fill: none; stroke: var(--ferry); stroke-width: 2; stroke-dasharray: 9 4; }
.t-dot{ fill: #fff; stroke: var(--name); stroke-width: 3; }
.t-route{
    font-size: 23px;
    font-weight: 700;
    text-anchor: middle;
    fill: #fff;
}
.t-name{
    font-size: 48px;
    font-weight: 500;
    fill: var(--name);
    stroke: var(--halo);
    stroke-width: 8px;
    stroke-linejoin: round;
    paint-order: stroke;
}
.t-name.small{
    font-size: 32px;
}
.style-name{
    flex: 1;
    padding-bottom: 4px;
    font-family: Lato, sans-serif;
    font-size: 28px;
    font-weight: 600;
    letter-spacing: 0.7px;
}
.edit{
    position: relative;
    display: flex;
    align-items: center;
    justify-content: center;
    width: 80px;
    height: 80px;
    margin-bottom: 4px;
    padding: 4px 0 0;
    border: 6px solid transparent;
    border-radius: 50%;
    background: none;
}
.edit svg{
    width: 28px;
    height: 28px;
    fill: #0b67e4;
}
.edit.focused{
    border-color: #0b67e4;
    background: #e4edfb;
}
.edit.focused svg{
    fill: #174ea6;
}
.tooltip{
    position: absolute;
    z-index: 1;
    top: 90px;
    left: -110px;
    width: 288px;
    height: 48px;
    border-radius: 8px;
    background: #3c4043;
    color: #e8eaed;
    font-family: Roboto, sans-serif;
    font-size: 24px;
    line-height: 47px;
    text-align: center;
    white-space: nowrap;
}
```
